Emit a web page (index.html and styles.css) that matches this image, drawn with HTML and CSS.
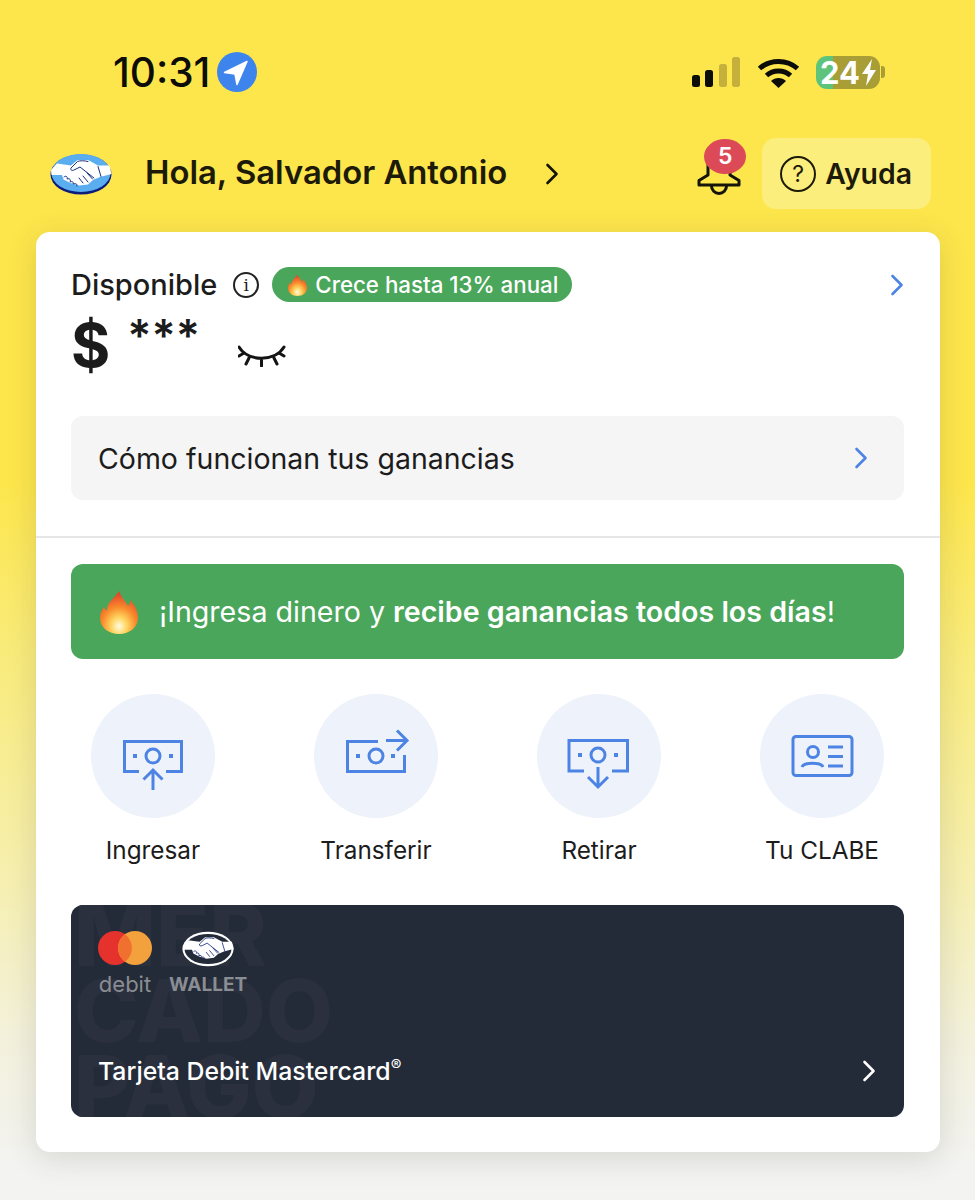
FILE: index.html

```html
<!DOCTYPE html>
<html lang="es">
<head>
<meta charset="utf-8">
<title>Mercado Pago</title>
<link rel="stylesheet" href="styles.css">
</head>
<body>
<svg class="defs" width="0" height="0">
  <defs>
    <radialGradient id="flameFill" cx="50%" cy="82%" r="75%">
      <stop offset="0" stop-color="#fffbe0"/>
      <stop offset="0.28" stop-color="#ffd45e"/>
      <stop offset="0.6" stop-color="#f98a2c"/>
      <stop offset="1" stop-color="#e4472a"/>
    </radialGradient>
    <symbol id="flame" viewBox="0 0 38 44">
      <path fill="url(#flameFill)" d="M19 1c3 8 6 9 9 15 2-2 2-4 2-6 5 5 8 11 8 18 0 9-8 16-19 16S0 37 0 28c0-5 2-8 4-11 1 2 2 3 3 4C6 13 14 9 19 1z"/>
    </symbol>
    <symbol id="chevron" viewBox="0 0 14 22">
      <path d="M2.500 2l9 9-9 9" fill="none" stroke="currentColor" stroke-width="2.600" stroke-linecap="round" stroke-linejoin="round"/>
    </symbol>
    <symbol id="hands" viewBox="0 0 62 42">
      <path fill="#fff" d="M1 17L7 10.500l14 2L27.500 7H38l10 5.500 11.500 0L61.500 21 50 24l-7 3-5 4.500-9 1-8.500-2.500-7-3.500L12 22H1.500z"/>
      <path fill="none" stroke="#17307f" stroke-width="1" stroke-linecap="round" stroke-linejoin="round" d="M38 8.500c-4-1-8-1-10.500 0L21 15c-1 2 1 3 3 2l6-3 14 11M37 20l5.500 6M33 23l5 6M29 25l4 5M48 13.500l3 10"/>
      <path fill="none" stroke="#17307f" stroke-width="1" stroke-linecap="round" d="M14 24c2-2 4 0 3 2 3-1 4 1 3 3 2-1 4 0 3 2 2-1 5 0 4 2"/>
    </symbol>
  </defs>
</svg>

<div class="page">
  <!-- barra de estado -->
  <div class="status">
    <div class="clock">
      <span class="time">10:31</span>
      <svg class="locate" width="40" height="40" viewBox="0 0 40 40">
        <circle cx="20" cy="20" r="20" fill="#3d84ec"/>
        <path d="M30 9.500L7.500 20.500l10.500 1.500 2 10.500z" fill="#fff" stroke="#fff" stroke-width="1.500" stroke-linejoin="round"/>
      </svg>
    </div>
    <div class="indicators">
      <svg class="signal" width="48" height="31" viewBox="0 0 48 31">
        <rect x="0" y="18" width="8" height="12" rx="2.500" fill="#0c0c08"/>
        <rect x="13" y="13" width="8" height="17" rx="2.500" fill="#0c0c08"/>
        <rect x="27" y="7" width="8" height="23" rx="2.500" fill="#c6b03c"/>
        <rect x="40" y="0" width="8" height="30" rx="2.500" fill="#c6b03c"/>
      </svg>
      <svg width="43" height="31" viewBox="0 0 43 31">
        <path d="M2.500 11.500C13 2 30 2 40.500 11.500" fill="none" stroke="#0c0c08" stroke-width="5"/>
        <path d="M9.500 18.500c6.500-6 17.500-6 24 0" fill="none" stroke="#0c0c08" stroke-width="5"/>
        <path d="M14 24c4-4 11-4 15 0l-7.500 7z" fill="#0c0c08"/>
      </svg>
      <div class="battery">
        <div class="battery-level">24<svg width="14" height="27" viewBox="0 0 14 27"><path d="M10 0L0 15h6l-2 12 10-16H8z" fill="#fff"/></svg></div>
        <span class="battery-nub"></span>
      </div>
    </div>
  </div>

  <!-- saludo -->
  <header class="top">
    <svg class="logo" width="62" height="42" viewBox="0 0 62 42">
      <ellipse cx="31" cy="21.500" rx="30.500" ry="20" fill="#0b1c7c"/>
      <ellipse cx="31" cy="20" rx="29.500" ry="19" fill="#5aaef0"/>
      <use href="#hands" width="62" height="42"/>
    </svg>
    <span class="hello">Hola, Salvador Antonio</span>
    <svg class="hello-arrow" width="14" height="22"><use href="#chevron"/></svg>
    <div class="bell">
      <svg width="44" height="46" viewBox="0 0 44 46">
        <path d="M2 34V29.500L11 24V12a11 11 0 0 1 22 0V24L42 29.500V34z" fill="none" stroke="#141408" stroke-width="3" stroke-linejoin="round"/>
        <path d="M14.500 35a7.500 7.500 0 0 0 15 0" fill="none" stroke="#141408" stroke-width="3"/>
      </svg>
      <span class="badge">5</span>
    </div>
    <div class="help">
      <span class="help-mark">?</span>
      <span>Ayuda</span>
    </div>
  </header>

  <main class="card">
    <section class="balance">
      <div class="balance-head">
        <span class="balance-title">Disponible</span>
        <span class="info">i</span>
        <span class="pill">
          <svg width="19" height="22"><use href="#flame"/></svg>
          Crece hasta 13% anual
        </span>
        <svg class="blue-arrow push" width="14" height="22"><use href="#chevron"/></svg>
      </div>
      <div class="amount">
        <span class="dollar">$</span>
        <span class="stars">***</span>
        <svg class="eye" width="48" height="22" viewBox="0 0 48 22">
          <path d="M1 2C10 17 37 17 46 2M1 11l5-3M46 11l-5-3M11 13l-3 6M36 13l3 6M23.500 15v6" fill="none" stroke="#141414" stroke-width="3" stroke-linecap="round"/>
        </svg>
      </div>
      <div class="earnings">
        <span>Cómo funcionan tus ganancias</span>
        <svg class="blue-arrow" width="14" height="22"><use href="#chevron"/></svg>
      </div>
    </section>

    <section class="moves">
      <div class="banner">
        <svg width="38" height="44"><use href="#flame"/></svg>
        <p>¡Ingresa dinero y <b>recibe ganancias todos los días</b>!</p>
      </div>

      <div class="actions">
        <div class="action">
          <svg class="action-icon" width="124" height="124" viewBox="0 0 124 124">
            <path d="M48 77.500H33.500V47.500H90.500V77.500H75M62 96V76M52.500 85.500L62 76l9.500 9.500"/>
            <circle cx="62" cy="62" r="7"/>
            <path class="dot" d="M42 60h4v4h-4zM78 60h4v4h-4z"/>
          </svg>
          <span>Ingresar</span>
        </div>
        <div class="action">
          <svg class="action-icon" width="124" height="124" viewBox="0 0 124 124">
            <path d="M64 47.500H33.500V77.500H90.500V61M72 46.500H93M83 36.500L93 46.500 83 56.500"/>
            <circle cx="62" cy="62" r="7"/>
            <path class="dot" d="M42 60h4v4h-4zM77 60h4v4h-4z"/>
          </svg>
          <span>Transferir</span>
        </div>
        <div class="action">
          <svg class="action-icon" width="124" height="124" viewBox="0 0 124 124">
            <path d="M47 77H32V46.500H90.500V77H75M61 73V93M51 83L61 93l10-10"/>
            <circle cx="61" cy="61" r="7"/>
            <path class="dot" d="M41 59h4v4h-4zM77 59h4v4h-4z"/>
          </svg>
          <span>Retirar</span>
        </div>
        <div class="action">
          <svg class="action-icon" width="124" height="124" viewBox="0 0 124 124">
            <rect x="33" y="42.500" width="59" height="39" rx="3"/>
            <circle cx="53" cy="58" r="5.500"/>
            <path d="M42 73c2-5 19-5 21 0M68 53H83M68 62.500H83M68 72H83"/>
          </svg>
          <span>Tu CLABE</span>
        </div>
      </div>

      <div class="debit">
        <div class="debit-mark">MER<br>CADO<br>PAGO</div>
        <div class="debit-logos">
          <div class="debit-logo">
            <svg width="54" height="34" viewBox="0 0 54 34">
              <circle cx="17" cy="17" r="17" fill="#e5322d"/>
              <circle cx="37" cy="17" r="17" fill="#f3a13c"/>
              <path d="M27 3.300a17 17 0 0 1 0 27.400 17 17 0 0 1 0-27.400z" fill="#f0702f"/>
            </svg>
            <span class="debit-word">debit</span>
          </div>
          <div class="debit-logo">
            <svg class="wallet-hands" width="52" height="36" viewBox="0 0 62 42">
              <ellipse cx="31" cy="21" rx="30.500" ry="20.500" fill="#fff"/>
              <ellipse cx="31" cy="21" rx="28" ry="18" fill="#242b38"/>
              <use href="#hands" width="62" height="42"/>
            </svg>
            <span class="wallet-word">WALLET</span>
          </div>
        </div>
        <div class="debit-foot">
          <span>Tarjeta Debit Mastercard<sup>®</sup></span>
          <svg width="14" height="22"><use href="#chevron"/></svg>
        </div>
      </div>
    </section>
  </main>
</div>
</body>
</html>
```

FILE: styles.css

```css
html,body{
   margin: 0px;
   padding: 0px;
}
body{
   font-family: "Inter", "Liberation Sans", sans-serif;
   color: #1c1c1c;
   background: #f3f3f3;
}
p{
   margin: 0px;
}
.defs{
   position: absolute;
}
.page{
   height: 1200px;
   overflow: hidden;
   background: linear-gradient(180deg, #fde64b 0px, #fde64b 480px, #f9eb7a 650px, #f6efb0 880px, #f3f1dc 1040px, #f3f3f2 1170px);
}

/* barra de estado */
.status{
   display: flex;
   justify-content: space-between;
   align-items: center;
   height: 40px;
   padding: 52px 90px 0px 113px;
}
.clock{
   display: flex;
   align-items: center;
   gap: 7px;
}
.time{
   font-size: 40.5px;
   font-weight: 500;
   color: #0c0c08;
}
.indicators{
   display: flex;
   align-items: center;
   gap: 16px;
}
.signal{
   margin-right: 1px;
}
.battery{
   display: flex;
   align-items: center;
   gap: 1px;
}
.battery-level{
   display: flex;
   align-items: center;
   justify-content: center;
   gap: 2px;
   width: 64px;
   height: 33px;
   border-radius: 11px;
   background: linear-gradient(90deg, #5fc47b 26%, #a99d36 26%);
   color: #fff;
   font-size: 31px;
   font-weight: 700;
}
.battery-nub{
   width: 4px;
   height: 12px;
   border-radius: 0px 3px 3px 0px;
   background: #a99d36;
}

/* saludo */
.top{
   display: flex;
   align-items: center;
   height: 71px;
   margin-top: 46px;
   padding: 0px 44px 0px 50px;
}
.hello{
   margin-left: 33px;
   font-size: 32.8px;
   font-weight: 600;
   line-height: 69px;
   margin-bottom: 2px;
   color: #1c1a08;
}
.hello-arrow{
   margin-left: 38px;
   color: #141408;
}
.bell{
   position: relative;
   width: 44px;
   height: 46px;
   margin-left: auto;
}
.badge{
   position: absolute;
   top: -12px;
   left: 7px;
   width: 42px;
   height: 35px;
   border-radius: 50%;
   background: #dc4a58;
   color: #fff;
   font-size: 23px;
   font-weight: 600;
   line-height: 35px;
   text-align: center;
}
.help{
   display: flex;
   align-items: center;
   gap: 9px;
   height: 71px;
   margin-left: 21px;
   padding: 0px 19px 0px 18px;
   border-radius: 14px;
   background: #fcee7d;
   font-size: 28.4px;
   font-weight: 600;
   color: #1c1a08;
}
.help-mark{
   width: 32px;
   height: 32px;
   border: 2.5px solid #1c1a08;
   border-radius: 50%;
   font-size: 23px;
   font-weight: 400;
   line-height: 32px;
   text-align: center;
}

/* tarjeta blanca */
.card{
   margin: 23px 35px 0px 36px;
   border-radius: 14px;
   background: #fff;
   box-shadow: 0px 6px 30px rgba(60,60,60,0.16);
}
.balance{
   padding: 35px 36px 36px 35px;
   border-bottom: 2px solid #e6e6e8;
}
.balance-head{
   display: flex;
   align-items: center;
   height: 35px;
}
.balance-title{
   font-size: 29px;
   font-weight: 500;
}
.info{
   width: 22px;
   height: 22px;
   margin-left: 16px;
   border: 2px solid #222;
   border-radius: 50%;
   font-family: "DejaVu Serif", serif;
   font-size: 17px;
   line-height: 22px;
   text-align: center;
}
.pill{
   display: flex;
   align-items: center;
   gap: 8px;
   height: 35px;
   margin-left: 13px;
   padding: 0px 14px 0px 16px;
   border-radius: 18px;
   background: #4aa65b;
   color: #fff;
   font-size: 22.3px;
   font-weight: 500;
}
.blue-arrow{
   color: #4d84e4;
}
.push{
   margin-left: auto;
}
.amount{
   display: flex;
   height: 70px;
   margin-top: 8px;
   line-height: 70px;
}
.dollar{
   font-size: 60px;
   font-weight: 700;
}
.stars{
   margin-left: 17px;
   font-size: 45px;
   font-weight: 600;
   line-height: 52px;
}
.eye{
   margin-left: 38px;
   margin-top: 35px;
}
.earnings{
   display: flex;
   justify-content: space-between;
   align-items: center;
   height: 84px;
   margin-top: 36px;
   padding: 0px 36px 0px 27px;
   border-radius: 12px;
   background: #f5f5f5;
   font-size: 28.5px;
}

.moves{
   padding: 26px 36px 35px 35px;
}
.banner{
   display: flex;
   align-items: center;
   gap: 21px;
   height: 95px;
   padding-left: 29px;
   border-radius: 12px;
   background: #4aa65b;
   color: #fff;
   font-size: 28.6px;
}
.banner b{
   font-weight: 600;
}
.actions{
   display: flex;
   justify-content: space-between;
   margin-top: 35px;
}
.action{
   display: flex;
   flex-direction: column;
   align-items: center;
   width: 164px;
   font-size: 24.3px;
   line-height: 30px;
}
.action-icon{
   border-radius: 50%;
   background: #edf2fb;
   margin-bottom: 17px;
}
.action-icon path,.action-icon circle,.action-icon rect{
   fill: none;
   stroke: #4d84e4;
   stroke-width: 3;
}
.action-icon .dot{
   fill: #4d84e4;
   stroke: none;
}

/* tarjeta debito */
.debit{
   position: relative;
   display: flex;
   flex-direction: column;
   justify-content: space-between;
   height: 212px;
   margin-top: 40px;
   padding: 26px 27px 0px 27px;
   box-sizing: border-box;
   overflow: hidden;
   border-radius: 12px;
   background: #242b38;
   color: #fff;
}
.debit-mark{
   position: absolute;
   top: -8px;
   left: 3px;
   color: #2a303d;
   font-size: 87px;
   font-weight: 800;
   line-height: 76px;
}
.debit-logos{
   position: relative;
   display: flex;
   gap: 17px;
}
.debit-logo{
   display: flex;
   flex-direction: column;
   align-items: center;
   gap: 6px;
}
.debit-word{
   color: #8a8d93;
   font-size: 22px;
}
.wallet-word{
   color: #8a8d93;
   font-size: 19px;
   font-weight: 700;
}
.debit-foot{
   position: relative;
   display: flex;
   justify-content: space-between;
   align-items: center;
   height: 34px;
   margin-bottom: 29px;
   padding-right: 1px;
   font-size: 24.8px;
   font-weight: 500;
}
.debit-foot sup{
   font-size: 16px;
   font-weight: 400;
   line-height: 0;
}
```
